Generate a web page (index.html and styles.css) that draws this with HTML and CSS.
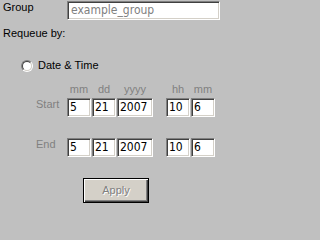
FILE: index.html
```html
<!DOCTYPE html>
<html>
<head>
<meta charset="utf-8">
<link rel="stylesheet" href="styles.css">
</head>
<body>
<div class="panel">
  <div class="group-row">
    <span class="label">Group</span>
    <div class="field group-field placeholder">example_group</div>
  </div>
  <div class="requeue">Requeue by:</div>
  <div class="radio-row">
    <span class="radio"><span class="radio-inner"></span></span>
    <span class="radio-text">Date &amp; Time</span>
  </div>
  <div class="time-grid">
    <span></span>
    <span class="col-label">mm</span>
    <span class="col-label">dd</span>
    <span class="col-label">yyyy</span>
    <span></span>
    <span class="col-label">hh</span>
    <span class="col-label">mm</span>

    <span class="row-label">Start</span>
    <div class="field">5</div>
    <div class="field">21</div>
    <div class="field">2007</div>
    <span></span>
    <div class="field">10</div>
    <div class="field">6</div>

    <div class="spacer"></div>

    <span class="row-label">End</span>
    <div class="field">5</div>
    <div class="field">21</div>
    <div class="field">2007</div>
    <span></span>
    <div class="field">10</div>
    <div class="field">6</div>
  </div>
  <div class="button-row">
    <div class="button">Apply</div>
  </div>
</div>
</body>
</html>
```

FILE: styles.css
```css
html, body {
  margin: 0;
  padding: 0;
  background: #c0c0c0;
}

body {
  width: 224px;
  height: 211px;
  overflow: hidden;
  font-family: "Liberation Sans", Arial, sans-serif;
  font-size: 11px;
  line-height: 13px;
  color: #000;
}

.panel {
  display: flex;
  flex-direction: column;
}

.group-row {
  display: flex;
  align-items: flex-start;
  padding: 1px 0 0 3px;
}

.label {
  width: 64px;
}

.field {
  box-sizing: border-box;
  height: 19px;
  background: #fff;
  border-style: solid;
  border-width: 1px;
  border-color: #808080 #fff #fff #808080;
  box-shadow: inset 1px 1px 0 #404040, inset -1px -1px 0 #d4d0c8;
  padding: 1px 0 0 2px;
  font-family: "Liberation Sans Narrow", "DejaVu Sans Condensed", sans-serif;
  font-size: 12px;
  line-height: 15px;
  color: #000;
  white-space: nowrap;
  overflow: hidden;
}

.group-field {
  width: 153px;
  padding-left: 3px;
}

.placeholder {
  color: #808080;
}

.requeue {
  margin-top: 7px;
  padding-left: 3px;
}

.radio-row {
  display: flex;
  align-items: center;
  gap: 5px;
  margin-top: 19px;
  padding-left: 21px;
}

.radio {
  box-sizing: border-box;
  width: 12px;
  height: 12px;
  border-radius: 50%;
  border: 1px solid;
  border-color: #808080 #fff #fff #808080;
  transform: rotate(0deg);
}

.radio-inner {
  display: block;
  box-sizing: border-box;
  width: 10px;
  height: 10px;
  border-radius: 50%;
  background: #fff;
  border: 1px solid;
  border-color: #404040 #d4d0c8 #d4d0c8 #404040;
}

.time-grid {
  display: grid;
  grid-template-columns: 30px 24px 24px 36px 11px 24px 24px;
  grid-template-rows: 13px 19px 17px 19px;
  column-gap: 1px;
  row-gap: 2px;
  margin-top: 11px;
  padding-left: 36px;
}

.col-label {
  color: #808080;
  text-align: center;
}

.row-label {
  color: #808080;
}

.spacer {
  grid-column: 1 / -1;
}

.button-row {
  display: flex;
  margin-top: 21px;
  padding-left: 83px;
}

.button {
  box-sizing: border-box;
  width: 66px;
  height: 25px;
  background: #d4d0c8;
  border: 1px solid #000;
  box-shadow: inset 1px 1px 0 #fff, inset -1px -1px 0 #404040, inset -2px -2px 0 #808080;
  display: flex;
  align-items: center;
  justify-content: center;
  color: #808080;
  text-shadow: 1px 1px 0 #fff;
  padding-bottom: 1px;
}
```
